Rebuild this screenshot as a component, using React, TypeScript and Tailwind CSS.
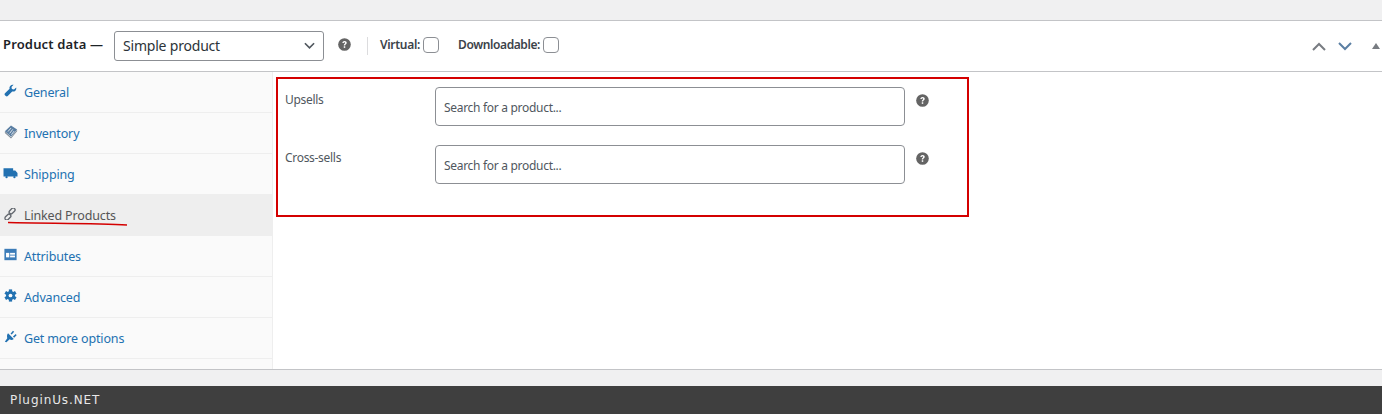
import React from "react";

const font = { fontFamily: '"Noto Sans", "Open Sans", sans-serif' };

function Help({ className = "" }: { className?: string }) {
  return (
    <svg viewBox="0 0 14 14" className={`w-[13px] h-[13px] ${className}`}>
      <circle cx="7" cy="7" r="6.800" fill="#646464" />
      <path d="M4.700 5.400c0-1.400 1.100-2.200 2.400-2.200s2.300.8 2.300 2c0 1.700-1.700 1.600-1.700 3H6.200c0-2.100 1.500-2 1.500-2.900 0-.4-.2-.6-.7-.6-.6 0-.8.300-.8.800z" fill="#fff" />
      <rect x="6.200" y="8.900" width="1.600" height="1.700" fill="#fff" />
    </svg>
  );
}

const Wrench = () => (
  <svg viewBox="0 0 16 16" className="w-[13px] h-[13px]" fill="#2271b1">
    <path d="M15 4.200c.4 1.500 0 3-1 4-1.100 1-2.600 1.300-3.900.9L4.600 14.900c-.6.6-1.700.6-2.400 0l-1-1c-.7-.7-.7-1.800 0-2.400l5.700-5.600C6.500 4.600 6.800 3.100 7.900 2 8.900 1 10.400.6 11.800 1L9.200 3.600l.5 2.600 2.600.6z" />
  </svg>
);
const Tag = () => (
  <svg viewBox="0 0 16 16" className="w-[14px] h-[14px]">
    <path d="M8 0.500l7 4.500-7 8.500-7-6.500z" fill="#5b7fa3" />
    <path d="M4.500 7.500l3.500-4M6.500 9.500l3.500-4.500M8.500 11l3-4" stroke="#fff" strokeWidth="0.900" />
    <path d="M1 7.500l7 6.500 7-8.500v1.500L8 15.500 1 9z" fill="#7e8a96" />
  </svg>
);
const Truck = () => (
  <svg viewBox="0 0 16 16" className="w-[15px] h-[14px] -ml-[1px]" fill="#2271b1">
    <path d="M0 2.500h11V12H0zM11 5h2.500L16 8v4h-5z" />
    <circle cx="3.500" cy="12.800" r="1.300" />
    <circle cx="12.500" cy="12.800" r="1.300" />
  </svg>
);
const LinkIcon = () => (
  <svg viewBox="0 0 16 16" className="w-[12px] h-[12px]" fill="none" stroke="#646970" strokeWidth="1.800">
    <rect x="8.300" y="-0.600" width="5" height="9" rx="2.500" transform="rotate(45 10.800 3.900)" />
    <rect x="2.700" y="7.600" width="5" height="9" rx="2.500" transform="rotate(45 5.200 12.100)" />
  </svg>
);
const Table = () => (
  <svg viewBox="0 0 16 16" className="w-[13px] h-[13px]">
    <rect x="0.500" y="1" width="15" height="14" fill="#3c7cb8" />
    <rect x="2.500" y="6" width="4" height="5.500" fill="#fff" />
    <rect x="7.500" y="6" width="6" height="2.200" fill="#fff" />
    <rect x="7.500" y="9.300" width="6" height="2.200" fill="#fff" />
  </svg>
);
const Gear = () => (
  <svg viewBox="0 0 16 16" className="w-[13px] h-[13px]">
    <g fill="#2271b1">
      {[0, 60, 120].map((a) => (
        <rect key={a} x="6" y="0.500" width="4" height="15" transform={`rotate(${a} 8 8)`} />
      ))}
      <circle cx="8" cy="8" r="5.500" />
    </g>
    <circle cx="8" cy="8" r="2.300" fill="#fafafa" />
  </svg>
);
const Plug = () => (
  <svg viewBox="0 0 16 16" className="w-[13px] h-[13px]" fill="#2271b1">
    <path d="M5 4l7 7c-1.500 1.500-3.500 1.500-5 .5L3 15l-2-.5 3-4.500C3.500 8 3.500 5.500 5 4z" />
    <path d="M8 4.500L11 1l1.500 1-3 3.500zM11 8l3.500-3 1 1.500-3 3z" />
  </svg>
);

const tabs: [string, React.ReactNode, boolean?][] = [
  ["General", <Wrench />],
  ["Inventory", <Tag />],
  ["Shipping", <Truck />],
  ["Linked Products", <LinkIcon />, true],
  ["Attributes", <Table />],
  ["Advanced", <Gear />],
  ["Get more options", <Plug />],
];

function Row({ label }: { label: string }) {
  return (
    <div className="flex items-start h-[39px]">
      <div className="w-[150px] pt-[4px] text-[12px] tracking-[-0.3px] leading-[18px] text-[#50575e]">{label}</div>
      <div className="w-[470px] h-[39px] border border-[#8c8f94] rounded-[4px] bg-white flex items-center pt-[2px] px-[8px] text-[12px] tracking-[-0.3px] text-[#50575e]">
        Search for a product...
      </div>
      <Help className="ml-[11px] mt-[7px]" />
    </div>
  );
}

export default function App() {
  return (
    <div className="w-[1382px] h-[414px] overflow-hidden bg-[#f0f0f1] flex flex-col" style={font}>
      <div className="h-[20px] shrink-0" />
      <div className="h-[350px] shrink-0 bg-white border-t border-b border-[#c3c4c7] flex flex-col">
        <div className="h-[51px] shrink-0 border-b border-[#c3c4c7] flex items-center relative">
          <span className="ml-[3px] w-[111px] pb-[2px] text-[13px] tracking-[0.15px] font-semibold text-[#1d2327] whitespace-nowrap">Product data —</span>
          <div className="w-[210px] h-[30px] border border-[#8c8f94] rounded-[3px] flex items-center justify-between pb-[2px] pl-[8px] pr-[8px] text-[14px] tracking-[-0.2px] text-[#2c3338]">
            <span>Simple product</span>
            <svg viewBox="0 0 12 8" className="w-[11px] h-[8px] mt-[2px]" fill="none" stroke="#50575e" strokeWidth="1.800"><path d="M1 1l5 5 5-5" /></svg>
          </div>
          <Help className="ml-[14px] -mt-[4px]" />
          <div className="ml-[16px] h-[18px] w-px bg-[#dcdcde]" />
          <span className="ml-[12px] pb-[2px] text-[12px] tracking-[-0.3px] font-semibold text-[#3c434a]">Virtual:</span>
          <div className="ml-[3px] -mt-[2px] w-[16px] h-[16px] border border-[#8c8f94] rounded-[4px] bg-white" />
          <span className="ml-[19px] pb-[2px] text-[12px] tracking-[-0.4px] font-semibold text-[#3c434a]">Downloadable:</span>
          <div className="ml-[3px] -mt-[2px] w-[16px] h-[16px] border border-[#8c8f94] rounded-[4px] bg-white" />
          <div className="ml-auto flex items-center">
            <svg viewBox="0 0 14 9" className="w-[14px] h-[9px]" fill="none" stroke="#787c82" strokeWidth="2"><path d="M1 8l6-6 6 6" /></svg>
            <svg viewBox="0 0 14 9" className="ml-[12px] w-[14px] h-[9px]" fill="none" stroke="#5b7fa3" strokeWidth="2"><path d="M1 1l6 6 6-6" /></svg>
            <svg viewBox="0 0 8 6" className="ml-[20px] mr-[2px] w-[8px] h-[6px]" fill="#787c82"><path d="M4 0l4 6H0z" /></svg>
          </div>
        </div>
        <div className="flex-1 flex min-h-0 relative">
          <div className="w-[273px] shrink-0 bg-[#fafafa] border-r border-[#eeeeee] text-[#2271b1]">
            {tabs.map(([name, icon, active]) => (
              <div
                key={name}
                className={`h-[41px] flex items-center pl-[4px] pt-[2px] text-[12.500px] tracking-[-0.15px] border-b ${active ? "bg-[#eeeeee] border-[#eeeeee] text-[#555555]" : "border-[#eeeeee]"}`}
              >
                <span className="w-[20px] -mt-[5px] flex items-center">{icon}</span>
                <span className="relative">{name}</span>
              </div>
            ))}
          </div>
          <div className="flex-1 pl-[12px] pt-[15px] flex flex-col gap-[19px]">
            <Row label="Upsells" />
            <Row label="Cross-sells" />
          </div>
          <div className="absolute left-[276px] top-[5px] w-[693px] h-[140px] border-2 border-[#d40000] pointer-events-none" />
          <svg className="absolute left-[8px] top-[149px] w-[120px] h-[6px]" viewBox="0 0 120 6" fill="none">
            <path d="M0 1.500C40 2.500 90 2 119 4" stroke="#d40000" strokeWidth="1.400" />
          </svg>
        </div>
      </div>
      <div className="flex-1" />
      <div className="h-[28px] shrink-0 bg-[#3f3f3f] flex items-center pl-[10px] text-[12px] tracking-[0.9px] text-[#e8e8e8]" style={{ fontFamily: '"DejaVu Sans", sans-serif' }}>
        PluginUs.NET
      </div>
    </div>
  );
}
